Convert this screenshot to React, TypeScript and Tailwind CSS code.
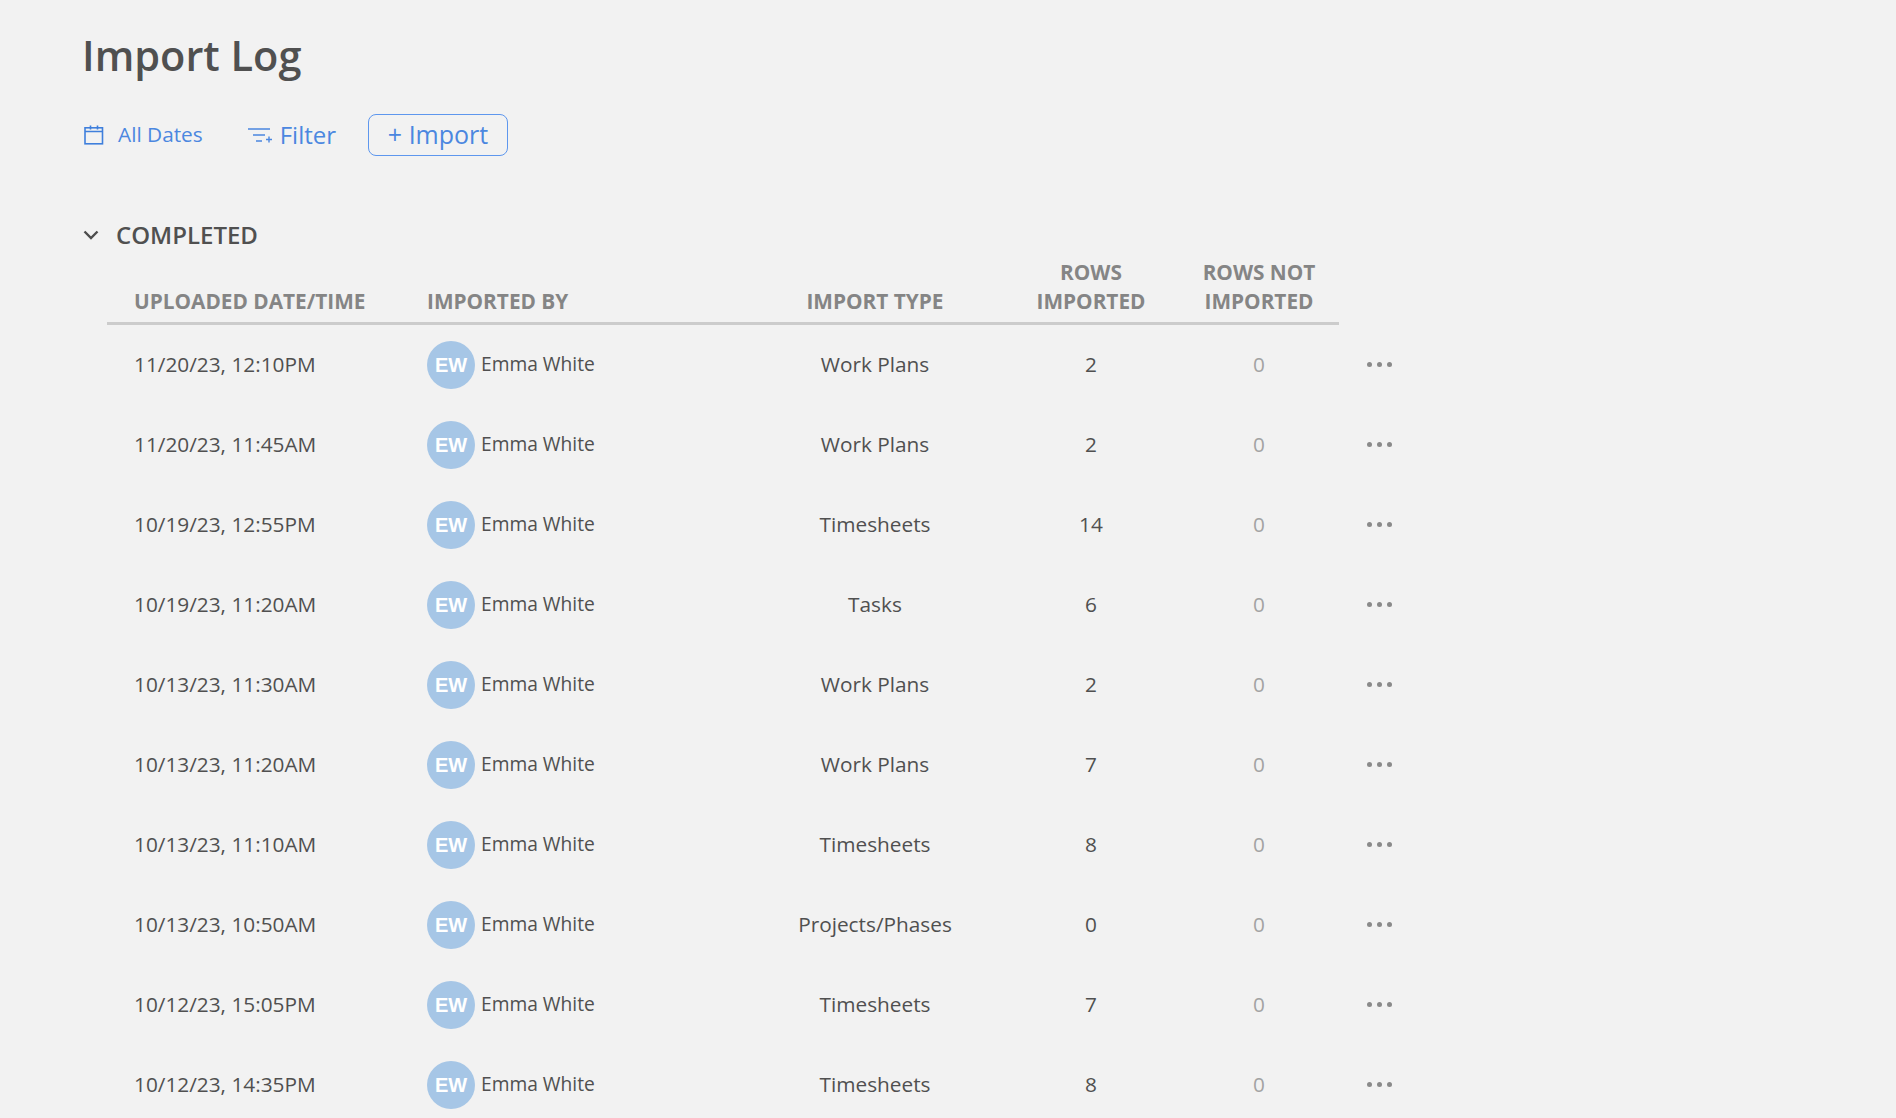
import React from 'react';

const rows = [
  ['11/20/23, 12:10PM', 'Work Plans', '2'],
  ['11/20/23, 11:45AM', 'Work Plans', '2'],
  ['10/19/23, 12:55PM', 'Timesheets', '14'],
  ['10/19/23, 11:20AM', 'Tasks', '6'],
  ['10/13/23, 11:30AM', 'Work Plans', '2'],
  ['10/13/23, 11:20AM', 'Work Plans', '7'],
  ['10/13/23, 11:10AM', 'Timesheets', '8'],
  ['10/13/23, 10:50AM', 'Projects/Phases', '0'],
  ['10/12/23, 15:05PM', 'Timesheets', '7'],
  ['10/12/23, 14:35PM', 'Timesheets', '8'],
];

const CalendarIcon = () => (
  <svg width="20" height="20" viewBox="0 0 20 20" fill="none" stroke="#3f7fdc" strokeWidth="1.6">
    <rect x="1" y="2.8" width="17.5" height="16" />
    <path d="M1 6.5h17.5M6.5 0.5v4M13.5 0.5v4" />
  </svg>
);

const FilterIcon = () => (
  <svg width="24" height="15" viewBox="0 0 24 15" fill="none" stroke="#4b87e0" strokeWidth="1.4">
    <path d="M0 1h22M5 7h12M8 13h6M21 8.5v6M18 11.5h6" />
  </svg>
);

const App = () => {
  return (
    <div className="h-[1118px] overflow-hidden bg-[#f2f2f2] pl-[82px] pt-[26px] font-['Open_Sans',sans-serif] text-[#505050]">
      <h1 className="text-[41.5px] leading-[58px] font-semibold">Import Log</h1>

      <div className="mt-[30px] flex h-[42px] items-center text-[#4b87e0]">
        <span className="ml-[2px]"><CalendarIcon /></span>
        <span className="ml-[14px] text-[20.8px]">All Dates</span>
        <span className="ml-[45px]"><FilterIcon /></span>
        <span className="ml-[8px] text-[24px]">Filter</span>
        <button className="ml-[32px] h-[42px] w-[140px] rounded-lg border border-[#5e97ee] text-[25px]">+ Import</button>
      </div>

      <div className="mt-[62px] flex items-center">
        <svg className="ml-[1px]" width="16" height="10" viewBox="0 0 16 10" fill="none" stroke="#4d4d4d" strokeWidth="2.4">
          <path d="M1.5 1.5 8 8l6.5-6.5" />
        </svg>
        <span className="ml-[17px] text-[24px] leading-[33px] font-semibold">COMPLETED</span>
      </div>

      <div className="ml-[25px]">
        <div className="flex h-[74px] w-[1232px] items-end border-b-[3px] border-[#cccccc] pb-[6px] text-[20.8px] leading-[29px] font-bold text-[#858585]">
          <div className="w-[320px] pl-[27px]">UPLOADED DATE/TIME</div>
          <div className="w-[323px]">IMPORTED BY</div>
          <div className="w-[250px] text-center">IMPORT TYPE</div>
          <div className="w-[182px] text-center">ROWS<br />IMPORTED</div>
          <div className="w-[154px] text-center">ROWS NOT<br />IMPORTED</div>
        </div>
        {rows.map(([date, type, count]) => (
          <div key={date} className="flex h-[80px] items-center pb-[1px] text-[20.8px]">
            <div className="w-[320px] pl-[27px]">{date}</div>
            <div className="flex w-[323px] items-center">
              <div className="flex h-[48px] w-[48px] items-center justify-center rounded-full bg-[#a6c6e6] font-['Liberation_Sans',sans-serif] text-[20px] font-bold text-white">EW</div>
              <span className="ml-[6px] text-[19.2px]">Emma White</span>
            </div>
            <div className="w-[250px] text-center">{type}</div>
            <div className="w-[182px] text-center">{count}</div>
            <div className="w-[154px] text-center text-[#a3a3a3]">0</div>
            <div className="ml-[31px] flex gap-[5px]">
              <span className="h-[5px] w-[5px] rounded-full bg-[#8a8a8a]" />
              <span className="h-[5px] w-[5px] rounded-full bg-[#8a8a8a]" />
              <span className="h-[5px] w-[5px] rounded-full bg-[#8a8a8a]" />
            </div>
          </div>
        ))}
      </div>
    </div>
  );
};

export default App;
